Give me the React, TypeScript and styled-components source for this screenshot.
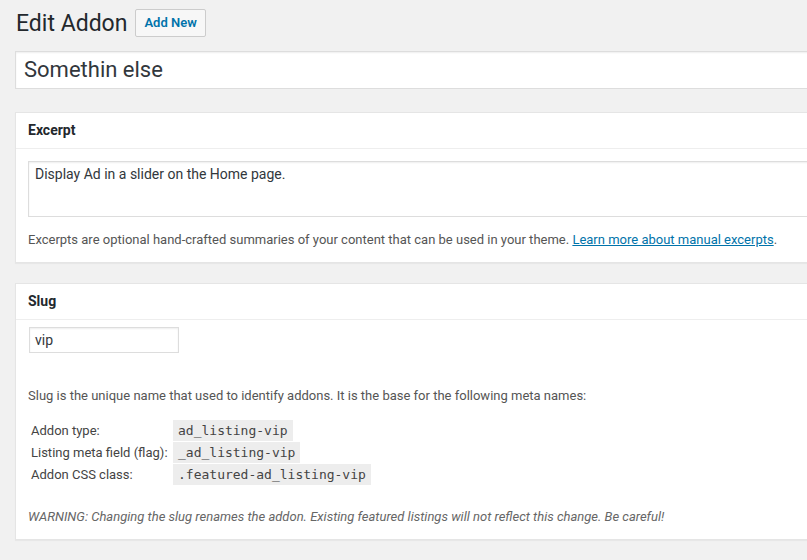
import React from "react";
import styled, { createGlobalStyle } from "styled-components";

const Global = createGlobalStyle`
  html, body { margin: 0; padding: 0; background: #f1f1f1; overflow: hidden; }
  body { font-family: Roboto, "Liberation Sans", Arial, sans-serif; font-size: 13px; color: #444; }
  * { box-sizing: border-box; }
`;

const Wrap = styled.div`
  width: 900px;
  height: 560px;
  overflow: hidden;
  padding: 9px 0 0 15px;
`;

const HeaderRow = styled.div`
  display: flex;
  align-items: center;
  gap: 8px;
  height: 28px;
`;

const Title = styled.h1`
  margin: 0 0 0 1px;
  font-size: 23px;
  font-weight: 400;
  line-height: 29px;
  color: #23282d;
`;

const AddNew = styled.button`
  height: 28px;
  padding: 0 8px;
  border: 1px solid #ccc;
  border-radius: 2px;
  background: #f7f7f7;
  color: #0073aa;
  font-family: Roboto, "Liberation Sans", Arial, sans-serif;
  font-size: 13px;
  font-weight: 600;
  line-height: 26px;
`;

const TitleInput = styled.div`
  margin-top: 14px;
  height: 38px;
  border: 1px solid #ddd;
  background: #fff;
  padding: 0 8px;
  font-size: 22px;
  line-height: 36px;
  color: #32373c;
  box-shadow: inset 0 1px 2px rgba(0, 0, 0, 0.07);
`;

const Box = styled.section<{ $top: number; $height?: number }>`
  margin-top: ${(p) => p.$top}px;
  ${(p) => (p.$height ? `height: ${p.$height}px;` : "")}
  background: #fff;
  border: 1px solid #e5e5e5;
  box-shadow: 0 1px 1px rgba(0, 0, 0, 0.04);
`;

const BoxHead = styled.h2`
  margin: 0;
  height: 36px;
  padding: 0 12px;
  border-bottom: 1px solid #eee;
  font-size: 14px;
  font-weight: 700;
  line-height: 35px;
  color: #23282d;
`;

const BoxBody = styled.div`
  padding: 12px 12px 13px;
`;

const TextArea = styled.div`
  height: 56px;
  border: 1px solid #ddd;
  box-shadow: inset 0 1px 2px rgba(0, 0, 0, 0.07);
  padding: 2px 6px;
  font-size: 14px;
  line-height: 20px;
  color: #32373c;
`;

const Desc = styled.p<{ $top: number }>`
  margin: ${(p) => p.$top}px 0 0;
  font-size: 13px;
  line-height: 19px;
  color: #555;
`;

const Link = styled.a`
  color: #0073aa;
  text-decoration: underline;
`;

const SlugInput = styled.div`
  margin: -5px 0 0 1px;
  width: 150px;
  height: 26px;
  border: 1px solid #ddd;
  box-shadow: inset 0 1px 2px rgba(0, 0, 0, 0.07);
  padding: 0 5px;
  font-size: 14px;
  line-height: 24px;
  color: #32373c;
`;

const MetaTable = styled.div`
  margin-top: 14px;
  display: grid;
  grid-template-columns: 142px auto;
  grid-auto-rows: 22px;
  padding-left: 3px;
  justify-content: start;
  align-items: center;
`;

const Label = styled.span`
  font-size: 13px;
  color: #444;
`;

const Code = styled.code`
  justify-self: start;
  background: rgba(0, 0, 0, 0.07);
  padding: 0 5px;
  height: 21px;
  font-family: "DejaVu Sans Mono", "Liberation Mono", monospace;
  font-size: 13px;
  line-height: 21px;
  color: #444;
`;

const Warning = styled.p`
  margin: 22px 0 0;
  font-size: 13px;
  line-height: 19px;
  font-style: italic;
  color: #666;
`;

const rows = [
  ["Addon type:", "ad_listing-vip"],
  ["Listing meta field (flag):", "_ad_listing-vip"],
  ["Addon CSS class:", ".featured-ad_listing-vip"],
];

export default function App() {
  return (
    <>
      <Global />
      <Wrap>
        <HeaderRow>
          <Title>Edit Addon</Title>
          <AddNew>Add New</AddNew>
        </HeaderRow>
        <TitleInput>Somethin else</TitleInput>

        <Box $top={23}>
          <BoxHead>Excerpt</BoxHead>
          <BoxBody>
            <TextArea>Display Ad in a slider on the Home page.</TextArea>
            <Desc $top={13}>
              Excerpts are optional hand-crafted summaries of your content that can be used in your theme.{" "}
              <Link href="#">Learn more about manual excerpts</Link>.
            </Desc>
          </BoxBody>
        </Box>

        <Box $top={20}>
          <BoxHead>Slug</BoxHead>
          <BoxBody>
            <SlugInput>vip</SlugInput>
            <Desc $top={33}>
              Slug is the unique name that used to identify addons. It is the base for the following meta names:
            </Desc>
            <MetaTable>
              {rows.map(([l, c]) => (
                <React.Fragment key={l}>
                  <Label>{l}</Label>
                  <Code>{c}</Code>
                </React.Fragment>
              ))}
            </MetaTable>
            <Warning>
              WARNING: Changing the slug renames the addon. Existing featured listings will not reflect this change. Be careful!
            </Warning>
          </BoxBody>
        </Box>

        <Box $top={20} $height={40} />
      </Wrap>
    </>
  );
}
